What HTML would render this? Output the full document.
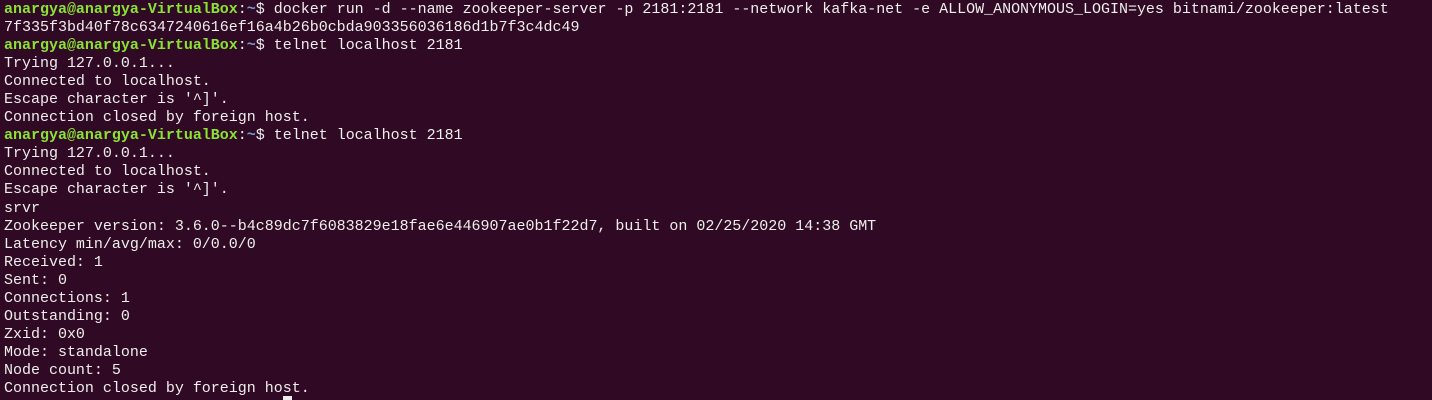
<html><head><style>
body{margin:0;background:#300a24;width:1432px;height:400px;overflow:hidden}
pre{margin:0;padding:1px 0 0 4px;font-family:"Liberation Mono",monospace;font-size:15px;line-height:18.05px;color:#eeeeec;letter-spacing:-0.01px}
.g{color:#8ae234;font-weight:bold}.b{color:#729fcf;font-weight:bold}
.c{position:absolute;left:283px;top:396px;width:9px;height:4px;background:#eee}
</style></head><body><pre><span class="g">anargya@anargya-VirtualBox</span>:<span class="b">~</span>$ docker run -d --name zookeeper-server -p 2181:2181 --network kafka-net -e ALLOW_ANONYMOUS_LOGIN=yes bitnami/zookeeper:latest
7f335f3bd40f78c6347240616ef16a4b26b0cbda903356036186d1b7f3c4dc49
<span class="g">anargya@anargya-VirtualBox</span>:<span class="b">~</span>$ telnet localhost 2181
Trying 127.0.0.1...
Connected to localhost.
Escape character is '^]'.
Connection closed by foreign host.
<span class="g">anargya@anargya-VirtualBox</span>:<span class="b">~</span>$ telnet localhost 2181
Trying 127.0.0.1...
Connected to localhost.
Escape character is '^]'.
srvr
Zookeeper version: 3.6.0--b4c89dc7f6083829e18fae6e446907ae0b1f22d7, built on 02/25/2020 14:38 GMT
Latency min/avg/max: 0/0.0/0
Received: 1
Sent: 0
Connections: 1
Outstanding: 0
Zxid: 0x0
Mode: standalone
Node count: 5
Connection closed by foreign host.
</pre><div class="c"></div></body></html>
